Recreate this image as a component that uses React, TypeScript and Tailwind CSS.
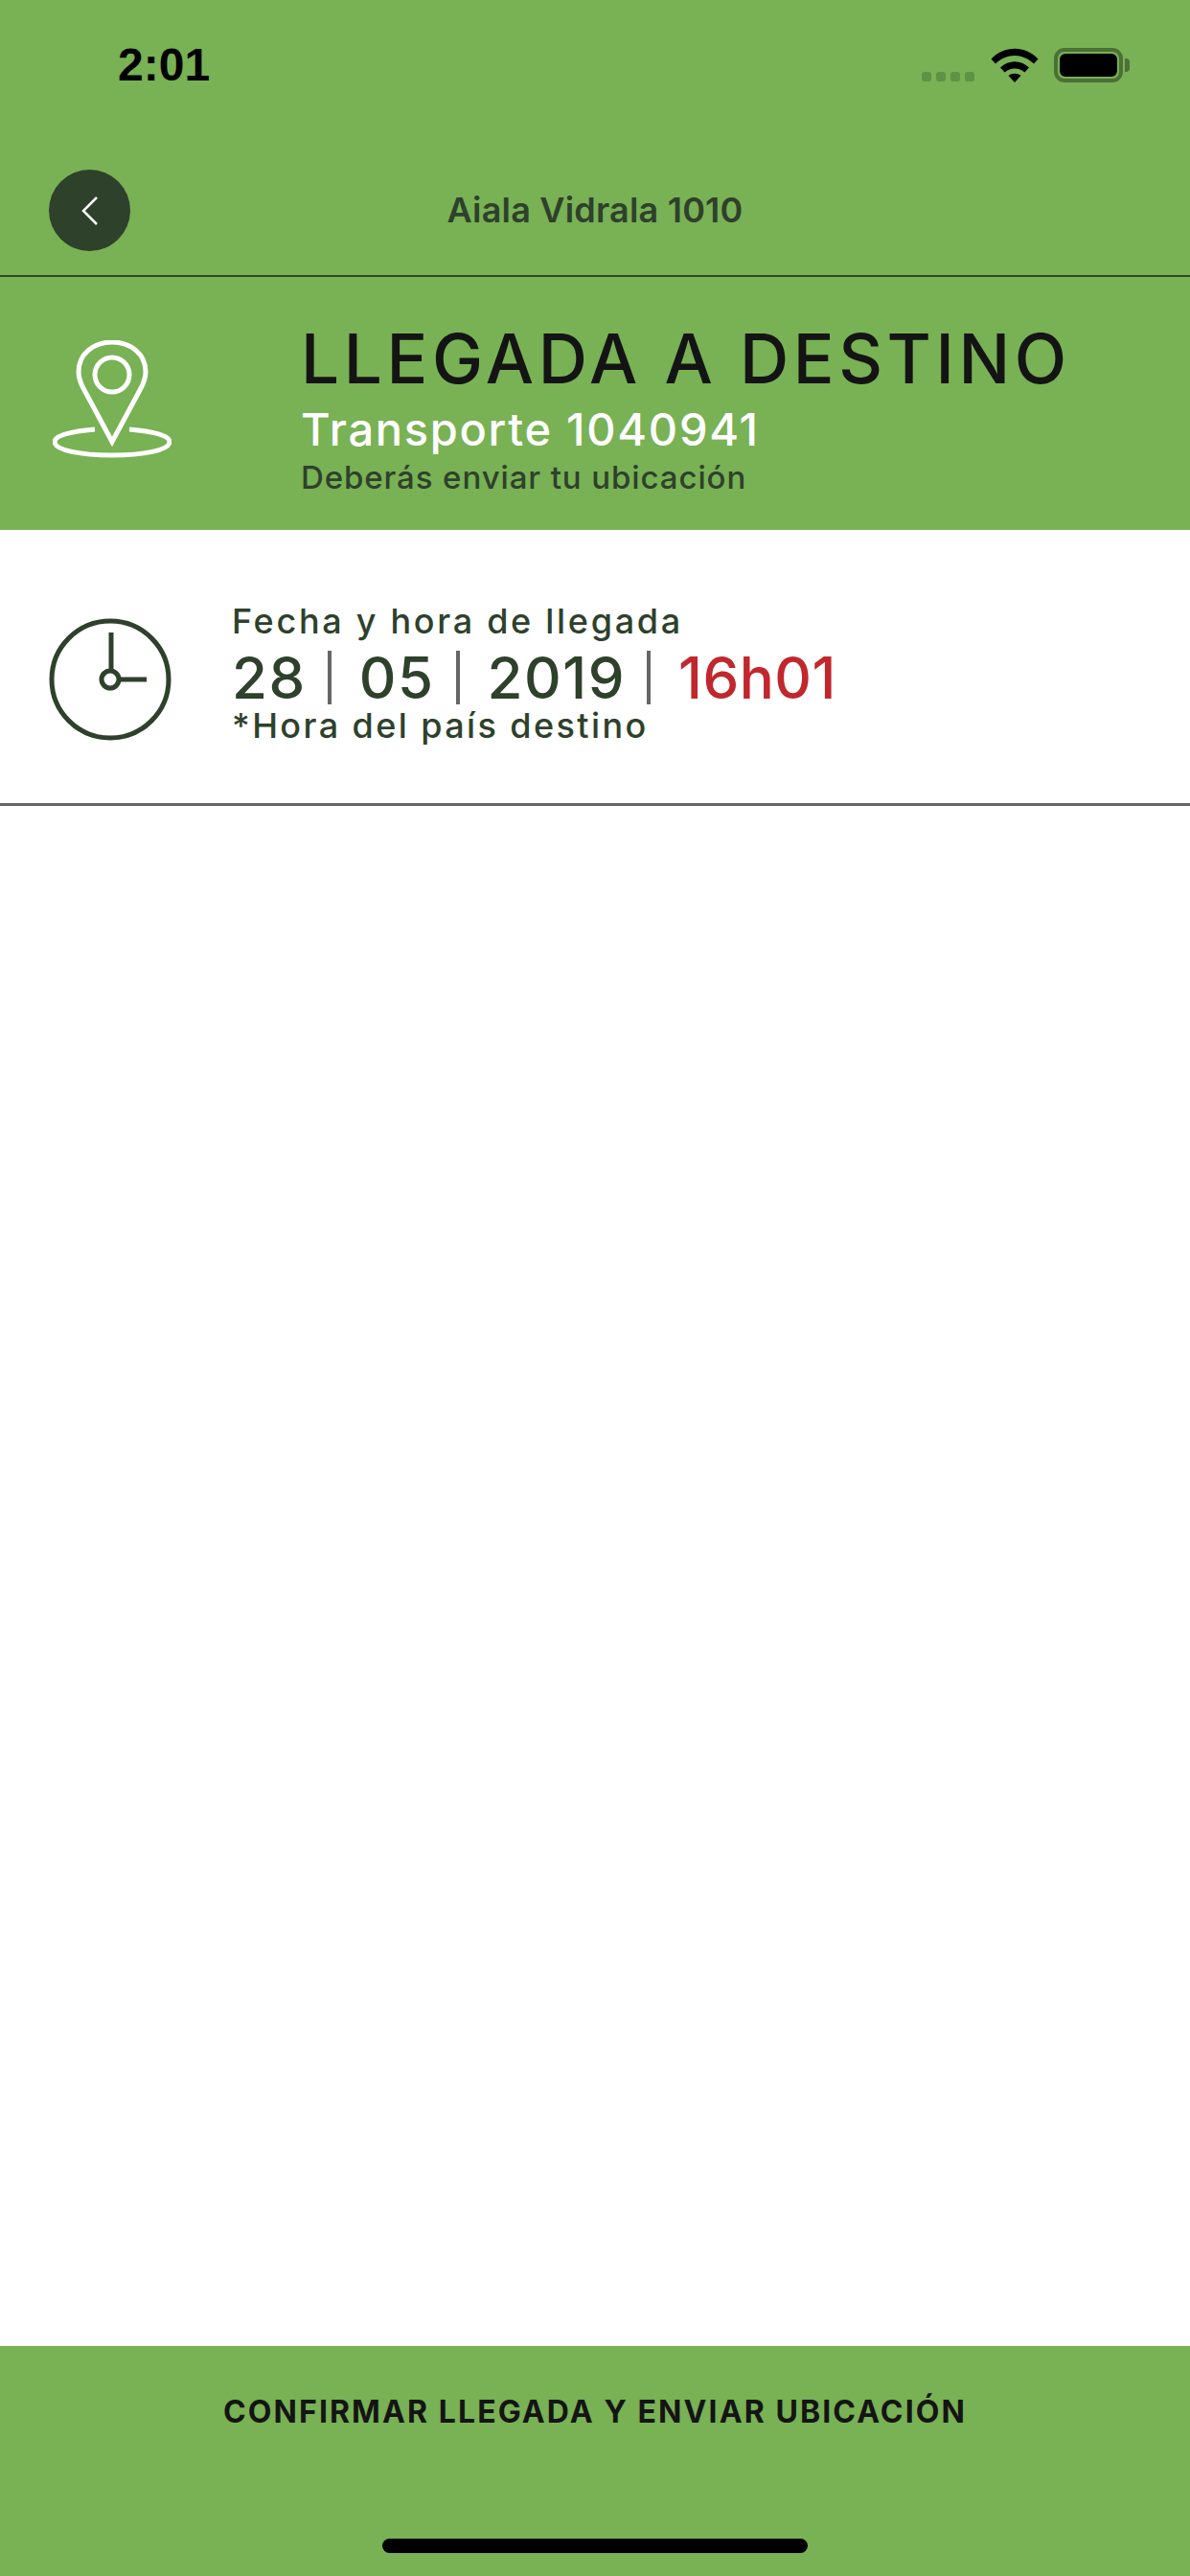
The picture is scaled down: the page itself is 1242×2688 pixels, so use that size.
export default function App() {
  return (
    <div className="w-[1242px] h-[2688px] flex flex-col bg-white overflow-hidden font-['Inter',sans-serif]">
      <div className="bg-[#79b155] h-[553px] flex flex-col shrink-0">
        <div className="h-[135px] pt-[44px] pl-[123px] pr-[70px] flex justify-between items-start shrink-0">
          <span className="text-[48px] leading-[48px] font-semibold text-black font-['Liberation_Sans',sans-serif]">2:01</span>
          <div className="flex items-start pt-[6px]">
            <div className="flex gap-[5px] mt-[25px] mr-[17px]">
              <span className="w-[10px] h-[10px] rounded-[3px] bg-[#5e9245]" />
              <span className="w-[10px] h-[10px] rounded-[3px] bg-[#5e9245]" />
              <span className="w-[10px] h-[10px] rounded-[3px] bg-[#5e9245]" />
              <span className="w-[10px] h-[10px] rounded-[3px] bg-[#5e9245]" />
            </div>
            <svg width="50" height="36" viewBox="0 0 50 36" className="mr-[16px]">
              <path d="M0.5 11.5 C14 -3 36 -3 49.5 11.5 L45 16.5 C33 5 17 5 5 16.5 Z" fill="#000" />
              <path d="M10 20.5 C19 12 31 12 40 20.5 L35.5 25.5 C29 20 21 20 14.5 25.5 Z" fill="#000" />
              <path d="M18.5 29 C22 26 28 26 31.5 29 L25 36 Z" fill="#000" />
            </svg>
            <div className="w-[72px] h-[36px] rounded-[11px] border-[4px] border-[#4b7136] p-[2px] relative">
              <div className="w-full h-full rounded-[6px] bg-black" />
              <span className="absolute right-[-11px] top-[7px] w-[5px] h-[14px] rounded-r-[4px] bg-[#4b7136]" />
            </div>
          </div>
        </div>
        <div className="h-[154px] border-b-[2px] border-[#2d4a1e] grid grid-cols-[1fr_auto_1fr] items-start px-[51px] shrink-0">
          <div className="mt-[42px] w-[85px] h-[85px] rounded-full bg-[#2e412b] flex items-center justify-center">
            <svg width="20" height="32" viewBox="0 0 20 32" fill="none">
              <path d="M17 2 L3 16 L17 30" stroke="#fff" strokeWidth="2.5" />
            </svg>
          </div>
          <span className="mt-[66px] text-[36px] leading-[36px] font-semibold text-[#2e412b] tracking-[0.2px]">Aiala Vidrala 1010</span>
          <span />
        </div>
        <div className="flex flex-1 pl-[55px]">
          <svg width="124" height="124" viewBox="0 0 124 124" fill="none" stroke="#fff" strokeWidth="5" className="mt-[66px] mr-[135px] shrink-0">
            <path d="M62 106 L33 52 C29 45 27 40 27 33 C27 14 43 2 62 2 C81 2 97 14 97 33 C97 40 95 45 91 52 Z" />
            <circle cx="62" cy="36" r="18" />
            <path d="M44 93 C20 95 2 99 2 106 C2 115 30 120 62 120 C94 120 122 115 122 106 C122 99 104 95 80 93" />
          </svg>
          <div className="flex flex-col pt-[47px]">
            <span className="text-[71px] leading-[76px] font-medium text-[#141414] tracking-[4.6px] whitespace-nowrap">LLEGADA A DESTINO</span>
            <span className="mt-[11px] text-[47px] leading-[50px] font-medium text-white tracking-[1.7px] whitespace-nowrap">Transporte 1040941</span>
            <span className="mt-[5px] text-[33px] leading-[40px] text-[#2e412b] font-medium tracking-[0.9px] whitespace-nowrap">Deberás enviar tu ubicación</span>
          </div>
        </div>
      </div>

      <div className="h-[288px] border-b-[3px] border-[#666666] flex pl-[51px] shrink-0">
        <svg width="128" height="128" viewBox="0 0 128 128" fill="none" stroke="#2e412b" strokeWidth="5" className="mt-[92px] mr-[63px] shrink-0">
          <circle cx="64" cy="64" r="61" />
          <path d="M65 15 L65 55" />
          <circle cx="64" cy="64" r="9" />
          <path d="M73 64 L102 64" />
        </svg>
        <div className="flex flex-col pt-[71px]">
          <span className="text-[36px] leading-[48px] font-medium text-[#2e412b] tracking-[2.7px] whitespace-nowrap">Fecha y hora de llegada</span>
          <div className="flex items-center mt-[6px] h-[58px] text-[60px] leading-[58px] font-medium text-[#2e412b] tracking-[1.5px] whitespace-nowrap">
            <span>28</span>
            <span className="w-[4px] h-[56px] bg-[#666666] ml-[22px] mr-[29px]" />
            <span>05</span>
            <span className="w-[4px] h-[56px] bg-[#666666] ml-[22px] mr-[29px]" />
            <span>2019</span>
            <span className="w-[4px] h-[56px] bg-[#666666] ml-[22px] mr-[29px]" />
            <span className="text-[#c1272d] tracking-[0.5px]">16h01</span>
          </div>
          <span className="text-[36px] leading-[42px] font-medium text-[#2e412b] tracking-[2.4px] whitespace-nowrap">*Hora del país destino</span>
        </div>
      </div>

      <div className="flex-1" />

      <div className="h-[240px] bg-[#79b155] flex flex-col items-center shrink-0">
        <span className="mt-[49px] text-[32px] leading-[40px] font-bold text-[#141414] tracking-[2.1px] whitespace-nowrap">CONFIRMAR LLEGADA Y ENVIAR UBICACIÓN</span>
        <div className="mt-[112px] w-[444px] h-[15px] rounded-full bg-black" />
      </div>
    </div>
  );
}
